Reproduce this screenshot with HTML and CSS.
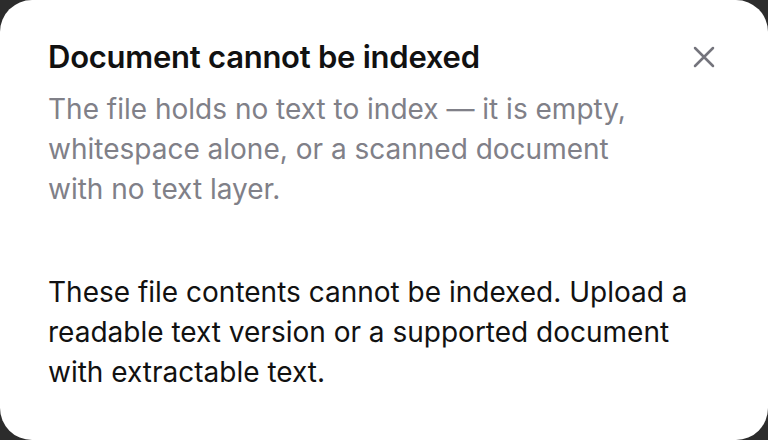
FILE: index.html
```html
<!DOCTYPE html>
<html>
<head>
<meta charset="utf-8">
<link rel="stylesheet" href="styles.css">
</head>
<body>
<div class="dialog">
  <div class="header">
    <h1 class="title">Document cannot be indexed</h1>
    <button class="close" aria-label="Close">
      <svg width="24" height="24" viewBox="0 0 24 24"><path d="M3 3 L21 21 M21 3 L3 21" stroke="#74747c" stroke-width="2.5" stroke-linecap="round" fill="none"/></svg>
    </button>
  </div>
  <p class="desc">The file holds no text to index — it is empty, whitespace alone, or a scanned document with no text layer.</p>
  <p class="body">These file contents cannot be indexed. Upload a readable text version or a supported document with extractable text.</p>
</div>
</body>
</html>
```
FILE: styles.css
```css
html, body {
  margin: 0;
  padding: 0;
  background: #2c2c2c;
}
.dialog {
  box-sizing: border-box;
  width: 768px;
  height: 440px;
  background: #fff;
  border-radius: 32px;
  padding: 37px 48px 0 48px;
  font-family: Inter, "Noto Sans", sans-serif;
}
.header {
  display: flex;
  justify-content: space-between;
  align-items: flex-start;
}
.title {
  margin: 0;
  font-size: 31px;
  line-height: 40px;
  font-weight: 600;
  color: #111;
  letter-spacing: -0.25px;
}
.close {
  border: 0;
  background: none;
  padding: 0;
  margin: 8px 4px 0 0;
  width: 24px;
  height: 24px;
  display: flex;
}
.desc {
  margin: 12px 0 0 0;
  width: 600px;
  font-size: 28px;
  line-height: 40px;
  color: #808088;
}
.body {
  margin: 63px 0 0 0;
  width: 660px;
  font-size: 28px;
  line-height: 40px;
  color: #111;
}
```
